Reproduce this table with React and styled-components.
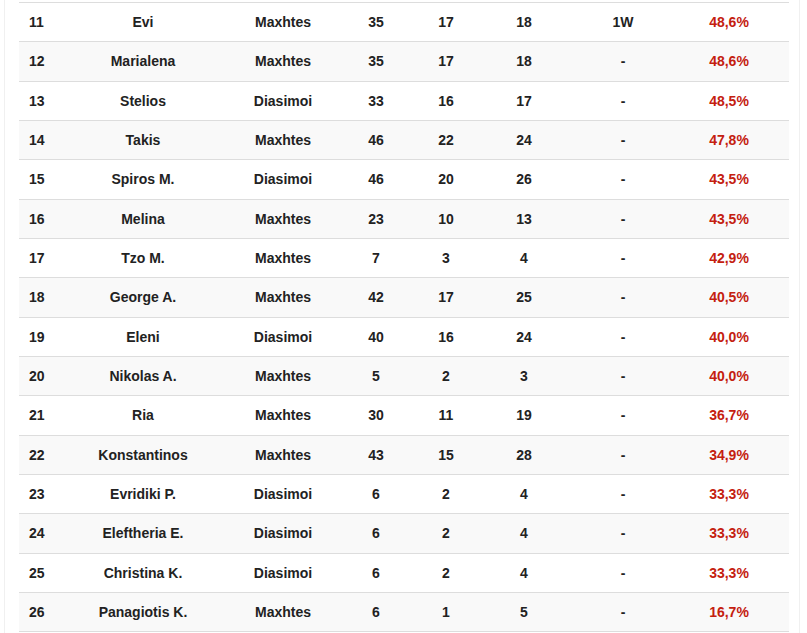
import styled, { createGlobalStyle } from "styled-components";

const players = [
  [11, "Evi", "Maxhtes", 35, 17, 18, "1W", "48,6%"],
  [12, "Marialena", "Maxhtes", 35, 17, 18, "-", "48,6%"],
  [13, "Stelios", "Diasimoi", 33, 16, 17, "-", "48,5%"],
  [14, "Takis", "Maxhtes", 46, 22, 24, "-", "47,8%"],
  [15, "Spiros M.", "Diasimoi", 46, 20, 26, "-", "43,5%"],
  [16, "Melina", "Maxhtes", 23, 10, 13, "-", "43,5%"],
  [17, "Tzo M.", "Maxhtes", 7, 3, 4, "-", "42,9%"],
  [18, "George A.", "Maxhtes", 42, 17, 25, "-", "40,5%"],
  [19, "Eleni", "Diasimoi", 40, 16, 24, "-", "40,0%"],
  [20, "Nikolas A.", "Maxhtes", 5, 2, 3, "-", "40,0%"],
  [21, "Ria", "Maxhtes", 30, 11, 19, "-", "36,7%"],
  [22, "Konstantinos", "Maxhtes", 43, 15, 28, "-", "34,9%"],
  [23, "Evridiki P.", "Diasimoi", 6, 2, 4, "-", "33,3%"],
  [24, "Eleftheria E.", "Diasimoi", 6, 2, 4, "-", "33,3%"],
  [25, "Christina K.", "Diasimoi", 6, 2, 4, "-", "33,3%"],
  [26, "Panagiotis K.", "Maxhtes", 6, 1, 5, "-", "16,7%"],
];

const GlobalStyle = createGlobalStyle`
  body {
    margin: 0;
    background: #fff;
    font-family: "Liberation Sans", Arial, sans-serif;
  }
`;

const Page = styled.div`
  margin-left: 4px;
  width: 796px;
  height: 633px;
  overflow: hidden;
  border-left: 1px solid #f0f0f0;
  border-right: 1px solid #f0f0f0;
  padding: 2px 0 0 14px;
  box-sizing: border-box;
`;

const Table = styled.div`
  width: 770px;
  border-bottom: 1px solid #dddddd;
`;

const Row = styled.div`
  display: grid;
  grid-template-columns: 41px 166px 114px 72px 68px 88px 110px 102px 1fr;
  align-items: center;
  height: 39.33px;
  box-sizing: border-box;
  border-top: 1px solid #dddddd;
  background: ${(p) => (p.$striped ? "#f9f9f9" : "#ffffff")};
`;

const Cell = styled.div`
  text-align: center;
  font-size: 14px;
  font-weight: bold;
  color: ${(p) => (p.$red ? "#c4200f" : "#222222")};
  white-space: nowrap;
`;

const RankCell = styled(Cell)`
  text-align: left;
  padding-left: 10px;
`;

export default function App() {
  return (
    <>
      <GlobalStyle />
      <Page>
        <Table>
          {players.map((p, i) => (
            <Row key={p[0]} $striped={i % 2 === 1}>
              <RankCell>{p[0]}</RankCell>
              {p.slice(1).map((v, j) => (
                <Cell key={j} $red={j === 6}>
                  {v}
                </Cell>
              ))}
              <span />
            </Row>
          ))}
        </Table>
      </Page>
    </>
  );
}
